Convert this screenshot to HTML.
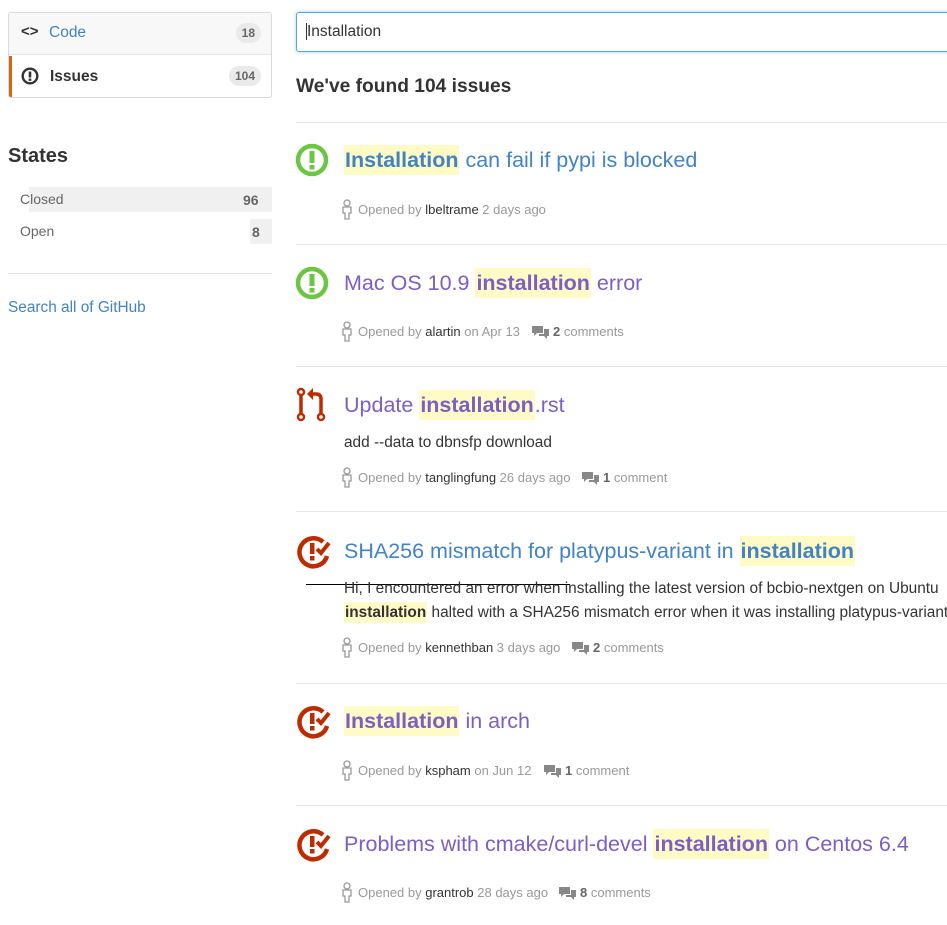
<!DOCTYPE html>
<html><head><meta charset="utf-8"><style>
*{box-sizing:border-box}
body{margin:0;width:947px;height:925px;overflow:hidden;background:#fff;font-family:"Liberation Sans",sans-serif;color:#333;position:relative}
.abs{position:absolute}
.menu{left:8px;top:12px;width:264px;height:86px;border:1px solid #d8d8d8;border-radius:3px;overflow:hidden}
.mi{position:absolute;left:0;width:262px;height:42px;font-size:15.5px}
.cnt{position:absolute;right:10px;top:10px;background:#eaeaea;border-radius:10px;font-size:12px;font-weight:bold;color:#666;padding:3px 6px}
.search{left:296px;top:12px;width:660px;height:40px;border:1px solid #51a7e8;border-radius:3px;box-shadow:0 0 4px rgba(81,167,232,.5);font-size:15.5px;padding:10px 9px}
.sep{left:296px;width:651px;height:1px;background:#e5e5e5}
.t{left:344px;font-size:21.5px;white-space:nowrap}
.blue{color:#4183c4}.purple{color:#7c5ec4}
mark{background:#fffbc6;color:inherit;font-weight:bold;padding:3px 1px}
.meta{left:341px;font-size:13px;color:#999;white-space:nowrap}
.meta b.u{color:#333;font-weight:normal}
.body{left:344px;font-size:15.4px;color:#333;white-space:nowrap}
</style></head><body>
<div class="abs menu">
 <div class="mi" style="top:0;background:#f8f8f8;border-bottom:1px solid #e5e5e5">
  <span class="abs" style="left:12px;top:10px;font-weight:bold;font-size:15px;color:#333">&lt;&gt;</span>
  <span class="abs" style="left:40px;top:11px;color:#4183c4">Code</span><span class="cnt">18</span></div>
 <div class="mi" style="top:43px;border-left:3px solid #d26911">
  <svg class="abs" style="left:9px;top:11px" width="18" height="18" viewBox="0 0 18 18"><circle cx="9" cy="9" r="7.3" fill="none" stroke="#333" stroke-width="2.4"/><rect x="7.7" y="4.5" width="2.6" height="6" fill="#333"/><rect x="7.7" y="11.5" width="2.6" height="2.4" fill="#333"/></svg>
  <span class="abs" style="left:38px;top:12px;font-weight:bold;color:#333">Issues</span><span class="cnt">104</span></div>
</div>
<div class="abs" style="left:8px;top:145px;font-size:20px;font-weight:bold">States</div>
<div class="abs" style="left:29px;top:187px;width:243px;height:25px;background:#f0f0f0"></div>
<div class="abs" style="left:250px;top:219px;width:22px;height:25px;background:#f0f0f0"></div>
<div class="abs" style="left:20px;top:191px;font-size:14px;color:#666">Closed</div>
<div class="abs" style="left:243px;top:192px;font-size:14px;color:#666;font-weight:bold">96</div>
<div class="abs" style="left:20px;top:223px;font-size:14px;color:#666">Open</div>
<div class="abs" style="left:252px;top:224px;font-size:14px;color:#666;font-weight:bold">8</div>
<div class="abs" style="left:8px;top:273px;width:264px;height:1px;background:#e5e5e5"></div>
<div class="abs" style="left:8px;top:299px;font-size:15.4px;color:#4183c4">Search all of GitHub</div>

<div class="abs search"><span style="border-left:1px solid #333"></span>Installation</div>
<div class="abs" style="left:296px;top:76px;font-size:19.2px;font-weight:bold">We've found 104 issues</div>

<div class="abs sep" style="top:122px"></div>
<div class="abs sep" style="top:244px"></div>
<div class="abs sep" style="top:366px"></div>
<div class="abs sep" style="top:511px"></div>
<div class="abs sep" style="top:683px"></div>
<div class="abs sep" style="top:805px"></div>

<svg width="0" height="0" style="position:absolute"><defs>
<g id="open"><circle cx="17" cy="17" r="14" fill="none" stroke="#6cc644" stroke-width="4.5"/><rect x="14.5" y="8" width="5" height="12" fill="#6cc644"/><rect x="14.5" y="22" width="5" height="4.5" fill="#6cc644"/></g>
<g id="closed"><path d="M26 8 A14 14 0 1 0 30 22" fill="none" stroke="#bd2c00" stroke-width="4.5"/><rect x="13" y="9" width="4.5" height="11" fill="#bd2c00"/><rect x="13" y="22" width="4.5" height="4.5" fill="#bd2c00"/><path d="M20 15 L24 19 L32 9" fill="none" stroke="#bd2c00" stroke-width="4"/></g>
<g id="pr"><circle cx="5" cy="30" r="3" fill="none" stroke="#bd2c00" stroke-width="2.5"/><circle cx="5" cy="5" r="3" fill="none" stroke="#bd2c00" stroke-width="2.5"/><circle cx="25" cy="30" r="3" fill="none" stroke="#bd2c00" stroke-width="2.5"/><path d="M5 8 V27 M25 27 V12 Q25 7 20 7 H14" fill="none" stroke="#bd2c00" stroke-width="3.5"/><path d="M17 1 L11 7 L17 13Z" fill="#bd2c00"/></g>
<g id="person"><circle cx="5" cy="4" r="3" fill="none" stroke="#999" stroke-width="1.3"/><path d="M1 8 H9 V14 H7 V20 H3 V14 H1Z" fill="none" stroke="#999" stroke-width="1.3"/></g>
<g id="cm"><path d="M0 2 H11 V9 H5 L2 12 V9 H0Z" fill="#888"/><path d="M12 5 H17 V12 H15 V15 L12 12 H7 V10 H12Z" fill="#888"/></g>
</defs></svg>

<svg class="abs" style="left:295px;top:143px" width="35" height="35"><use href="#open"/></svg>
<div class="abs t blue" style="top:148px"><mark>Installation</mark> can fail if pypi is blocked</div>
<svg class="abs" style="left:342px;top:199px" width="11" height="22"><use href="#person"/></svg>
<div class="abs meta" style="left:358px;top:202px">Opened by <b class="u">lbeltrame</b> 2 days ago</div>

<svg class="abs" style="left:295px;top:266px" width="35" height="35"><use href="#open"/></svg>
<div class="abs t purple" style="top:271px">Mac OS 10.9 <mark>installation</mark> error</div>
<svg class="abs" style="left:342px;top:321px" width="11" height="22"><use href="#person"/></svg>
<div class="abs meta" style="left:358px;top:324px">Opened by <b class="u">alartin</b> on Apr 13</div>
<svg class="abs" style="left:532px;top:324px" width="18" height="16"><use href="#cm"/></svg>
<div class="abs meta" style="left:553px;top:324px"><b style="color:#666">2</b> comments</div>

<svg class="abs" style="left:296px;top:387px" width="32" height="36"><use href="#pr"/></svg>
<div class="abs t purple" style="top:393px">Update <mark>installation</mark>.rst</div>
<div class="abs body" style="top:434px">add --data to dbnsfp download</div>
<svg class="abs" style="left:342px;top:467px" width="11" height="22"><use href="#person"/></svg>
<div class="abs meta" style="left:358px;top:470px">Opened by <b class="u">tanglingfung</b> 26 days ago</div>
<svg class="abs" style="left:582px;top:470px" width="18" height="16"><use href="#cm"/></svg>
<div class="abs meta" style="left:603px;top:470px"><b style="color:#666">1</b> comment</div>

<svg class="abs" style="left:297px;top:534px" width="35" height="35"><use href="#closed"/></svg>
<div class="abs t blue" style="top:539px">SHA256 mismatch for platypus-variant in <mark>installation</mark></div>
<div class="abs" style="left:306px;top:584px;width:264px;height:1px;background:#000"></div>
<div class="abs body" style="top:580px">Hi, I encountered an error when installing the latest version of bcbio-nextgen on Ubuntu</div>
<div class="abs body" style="top:604px"><mark style="padding:2px 1px">installation</mark> halted with a SHA256 mismatch error when it was installing platypus-variant</div>
<svg class="abs" style="left:342px;top:637px" width="11" height="22"><use href="#person"/></svg>
<div class="abs meta" style="left:358px;top:640px">Opened by <b class="u">kennethban</b> 3 days ago</div>
<svg class="abs" style="left:572px;top:640px" width="18" height="16"><use href="#cm"/></svg>
<div class="abs meta" style="left:593px;top:640px"><b style="color:#666">2</b> comments</div>

<svg class="abs" style="left:297px;top:704px" width="35" height="35"><use href="#closed"/></svg>
<div class="abs t purple" style="top:709px"><mark>Installation</mark> in arch</div>
<svg class="abs" style="left:342px;top:760px" width="11" height="22"><use href="#person"/></svg>
<div class="abs meta" style="left:358px;top:763px">Opened by <b class="u">kspham</b> on Jun 12</div>
<svg class="abs" style="left:544px;top:763px" width="18" height="16"><use href="#cm"/></svg>
<div class="abs meta" style="left:565px;top:763px"><b style="color:#666">1</b> comment</div>

<svg class="abs" style="left:297px;top:827px" width="35" height="35"><use href="#closed"/></svg>
<div class="abs t purple" style="top:832px">Problems with cmake/curl-devel <mark>installation</mark> on Centos 6.4</div>
<svg class="abs" style="left:342px;top:882px" width="11" height="22"><use href="#person"/></svg>
<div class="abs meta" style="left:358px;top:885px">Opened by <b class="u">grantrob</b> 28 days ago</div>
<svg class="abs" style="left:559px;top:885px" width="18" height="16"><use href="#cm"/></svg>
<div class="abs meta" style="left:580px;top:885px"><b style="color:#666">8</b> comments</div>
</body></html>
